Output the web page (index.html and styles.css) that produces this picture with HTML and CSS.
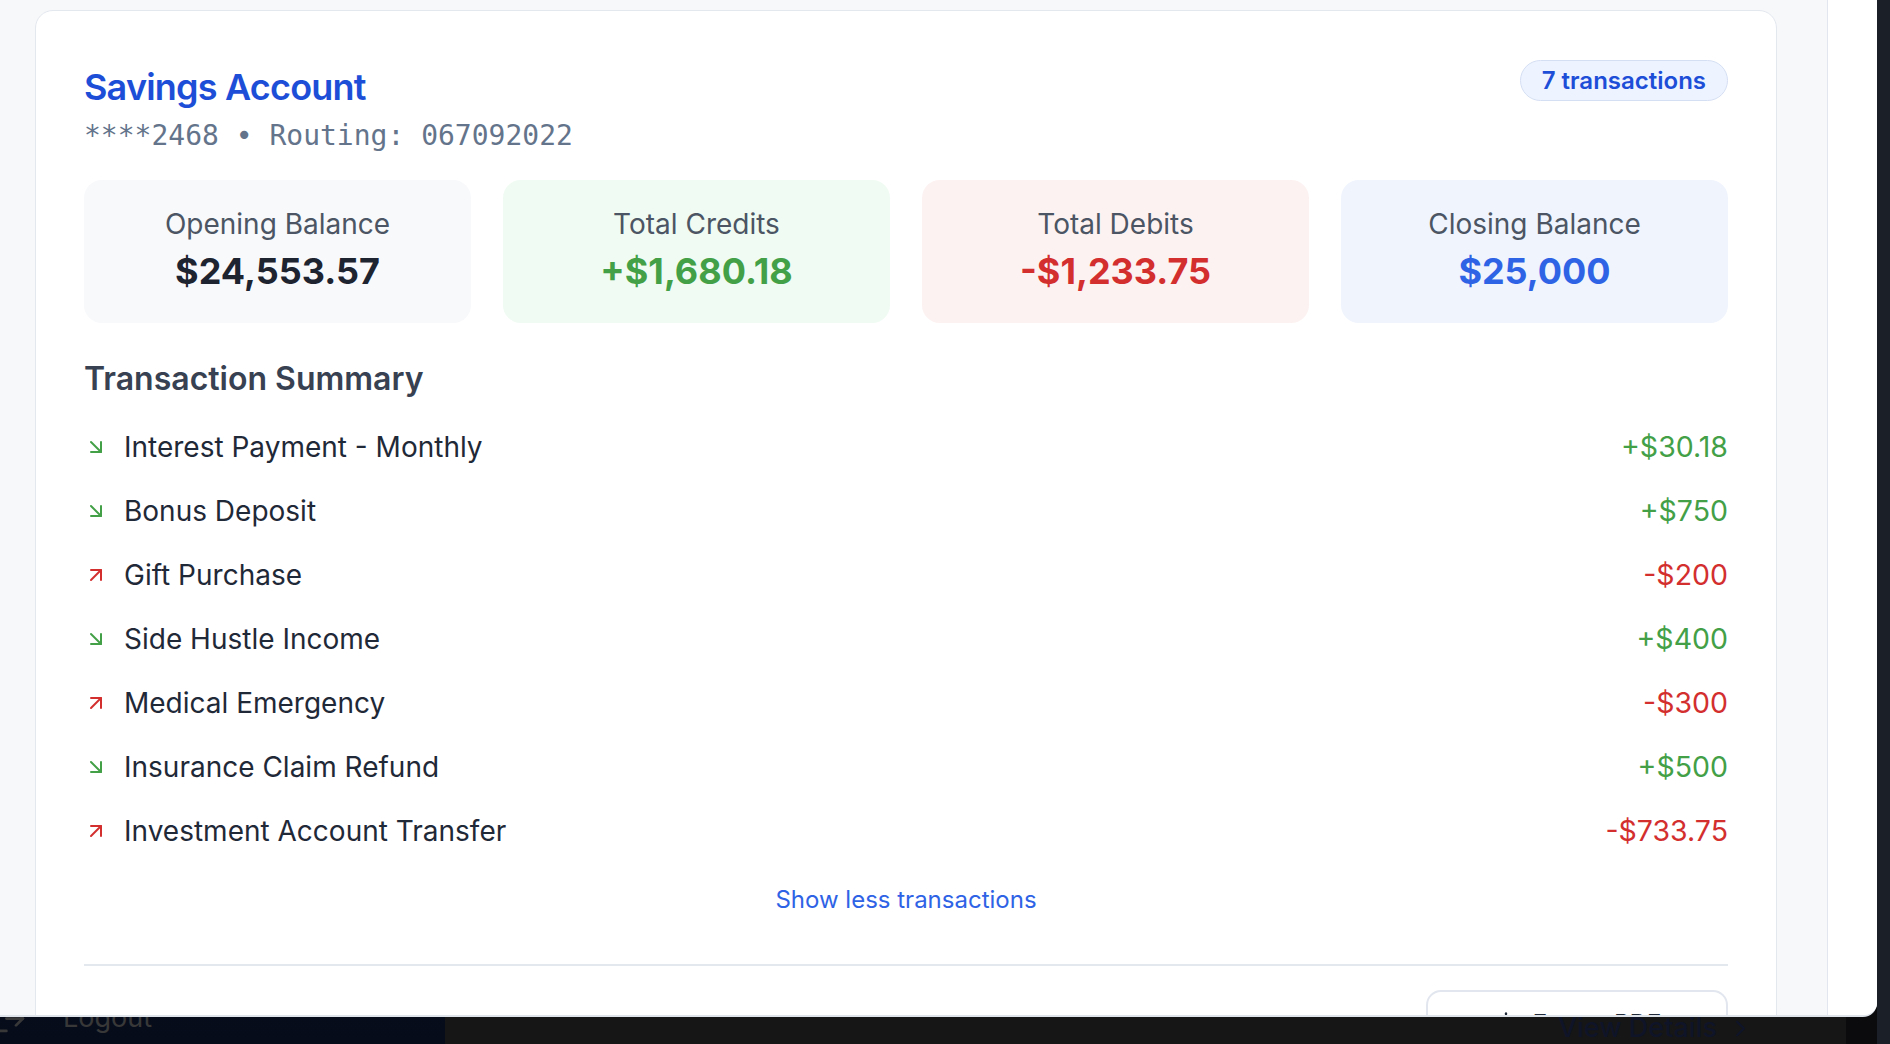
FILE: index.html
```html
<!DOCTYPE html>
<html lang="en">
<head>
<meta charset="utf-8">
<title>Savings Account</title>
<link rel="stylesheet" href="styles.css">
</head>
<body>
<div class="desktop">
  <div class="backdrop">
    <aside class="sidebar">
      <div class="logout">
        <svg class="logout-icon" viewBox="0 0 24 24" fill="none" stroke="currentColor" stroke-width="2" stroke-linecap="round" stroke-linejoin="round"><path d="M9 21H5a2 2 0 0 1-2-2V5a2 2 0 0 1 2-2h4"/><polyline points="16 17 21 12 16 7"/><line x1="21" y1="12" x2="9" y2="12"/></svg>
        <span>Logout</span>
      </div>
    </aside>
    <div class="behind">
      <div class="view-details">View Details
        <svg class="chev" viewBox="0 0 24 24" fill="none" stroke="currentColor" stroke-width="2" stroke-linecap="round" stroke-linejoin="round"><polyline points="9 18 15 12 9 6"/></svg>
      </div>
    </div>
    <div class="dark-edge"></div>
  </div>

  <div class="window">
    <div class="panel">
      <section class="card">
        <div class="head">
          <div>
            <h2 class="title">Savings Account</h2>
            <div class="acct">****2468 • Routing: 067092022</div>
          </div>
          <span class="badge">7 transactions</span>
        </div>

        <div class="stats">
          <div class="stat stat-open">
            <div class="stat-label">Opening Balance</div>
            <div class="stat-value">$24,553.57</div>
          </div>
          <div class="stat stat-credit">
            <div class="stat-label">Total Credits</div>
            <div class="stat-value">+$1,680.18</div>
          </div>
          <div class="stat stat-debit">
            <div class="stat-label">Total Debits</div>
            <div class="stat-value">-$1,233.75</div>
          </div>
          <div class="stat stat-close">
            <div class="stat-label">Closing Balance</div>
            <div class="stat-value">$25,000</div>
          </div>
        </div>

        <h3 class="sum-title">Transaction Summary</h3>
        <ul class="tx-list">
          <li class="tx">
            <div class="tx-left">
              <svg class="tx-icon in" viewBox="0 0 24 24" fill="none" stroke="currentColor" stroke-width="2" stroke-linecap="round" stroke-linejoin="round"><path d="M7 7l10 10"/><path d="M17 7v10H7"/></svg>
              <span class="tx-name">Interest Payment - Monthly</span>
            </div>
            <span class="tx-amt in">+$30.18</span>
          </li>
          <li class="tx">
            <div class="tx-left">
              <svg class="tx-icon in" viewBox="0 0 24 24" fill="none" stroke="currentColor" stroke-width="2" stroke-linecap="round" stroke-linejoin="round"><path d="M7 7l10 10"/><path d="M17 7v10H7"/></svg>
              <span class="tx-name">Bonus Deposit</span>
            </div>
            <span class="tx-amt in">+$750</span>
          </li>
          <li class="tx">
            <div class="tx-left">
              <svg class="tx-icon out" viewBox="0 0 24 24" fill="none" stroke="currentColor" stroke-width="2" stroke-linecap="round" stroke-linejoin="round"><path d="M7 17L17 7"/><path d="M7 7h10v10"/></svg>
              <span class="tx-name">Gift Purchase</span>
            </div>
            <span class="tx-amt out">-$200</span>
          </li>
          <li class="tx">
            <div class="tx-left">
              <svg class="tx-icon in" viewBox="0 0 24 24" fill="none" stroke="currentColor" stroke-width="2" stroke-linecap="round" stroke-linejoin="round"><path d="M7 7l10 10"/><path d="M17 7v10H7"/></svg>
              <span class="tx-name">Side Hustle Income</span>
            </div>
            <span class="tx-amt in">+$400</span>
          </li>
          <li class="tx">
            <div class="tx-left">
              <svg class="tx-icon out" viewBox="0 0 24 24" fill="none" stroke="currentColor" stroke-width="2" stroke-linecap="round" stroke-linejoin="round"><path d="M7 17L17 7"/><path d="M7 7h10v10"/></svg>
              <span class="tx-name">Medical Emergency</span>
            </div>
            <span class="tx-amt out">-$300</span>
          </li>
          <li class="tx">
            <div class="tx-left">
              <svg class="tx-icon in" viewBox="0 0 24 24" fill="none" stroke="currentColor" stroke-width="2" stroke-linecap="round" stroke-linejoin="round"><path d="M7 7l10 10"/><path d="M17 7v10H7"/></svg>
              <span class="tx-name">Insurance Claim Refund</span>
            </div>
            <span class="tx-amt in">+$500</span>
          </li>
          <li class="tx">
            <div class="tx-left">
              <svg class="tx-icon out" viewBox="0 0 24 24" fill="none" stroke="currentColor" stroke-width="2" stroke-linecap="round" stroke-linejoin="round"><path d="M7 17L17 7"/><path d="M7 7h10v10"/></svg>
              <span class="tx-name">Investment Account Transfer</span>
            </div>
            <span class="tx-amt out">-$733.75</span>
          </li>
        </ul>

        <div class="toggle"><button class="toggle-btn">Show less transactions</button></div>

        <div class="foot">
          <button class="export">
            <svg class="export-icon" viewBox="0 0 24 24" fill="none" stroke="currentColor" stroke-width="2" stroke-linecap="round" stroke-linejoin="round"><path d="M21 15v4a2 2 0 0 1-2 2H5a2 2 0 0 1-2-2v-4"/><polyline points="7 10 12 15 17 10"/><line x1="12" y1="15" x2="12" y2="3"/></svg>
            <span>Export PDF</span>
          </button>
        </div>
      </section>
    </div>
    <div class="gutter"></div>
  </div>
</div>
<div class="edge"></div>
</body>
</html>
```
FILE: styles.css
```css
* {
  box-sizing: border-box;
  margin: 0;
  padding: 0;
}

html, body {
  width: 1890px;
  height: 1044px;
  overflow: hidden;
}

body {
  display: flex;
  background: #1b1f27;
  font-family: Inter, "Noto Sans", sans-serif;
  color: #1f2937;
}

.desktop {
  position: relative;
  width: 1877px;
  height: 1044px;
  flex: none;
}

.edge {
  flex: 1;
  background: #1b1f27;
}

/* ---------- what lies behind the window ---------- */
.backdrop {
  display: flex;
  height: 100%;
}

.sidebar {
  width: 445px;
  background: linear-gradient(180deg, #0c1326 0%, #070c1b 100%);
  display: flex;
  flex-direction: column;
  justify-content: flex-end;
}

.logout {
  display: flex;
  align-items: center;
  gap: 36px;
  height: 40px;
  margin-bottom: 6px;
  margin-left: -6px;
  color: #383838;
  font-size: 27px;
  line-height: 40px;
}

.logout-icon {
  width: 33px;
  height: 33px;
}

.behind {
  flex: 1;
  background: #161616;
  display: flex;
  align-items: flex-end;
  justify-content: flex-end;
  padding-right: 92px;
}

.view-details {
  display: flex;
  align-items: center;
  gap: 10px;
  height: 36px;
  margin-bottom: -2px;
  color: #0f1428;
  font-size: 27px;
  line-height: 36px;
  font-weight: 500;
}

.chev {
  width: 27px;
  height: 27px;
}

.dark-edge {
  width: 31px;
  background: #0b0b0e;
}

/* ---------- window ---------- */
.window {
  position: absolute;
  top: 0;
  left: 0;
  width: 1877px;
  height: 1017px;
  display: flex;
  background: #ffffff;
  border-bottom: 2px solid #dfe3ea;
  border-bottom-right-radius: 14px;
  overflow: hidden;
}

.panel {
  width: 1828px;
  flex: none;
  background: #f7f8fa;
  border-right: 1px solid #e2e6ee;
  padding: 10px 50px 0 35px;
  overflow: hidden;
}

.gutter {
  flex: 1;
  background: #ffffff;
}

.card {
  background: #ffffff;
  border: 1px solid #e3e7ee;
  border-radius: 18px;
  padding: 48px 48px 48px 48px;
}

.head {
  display: flex;
  justify-content: space-between;
  align-items: flex-start;
}

.title {
  font-size: 36px;
  line-height: 56px;
  font-weight: 600;
  color: #1d4ed8;
  letter-spacing: -0.8px;
}

.acct {
  font-family: "DejaVu Sans Mono", "Liberation Mono", monospace;
  font-size: 28px;
  line-height: 42px;
  color: #64748b;
}

.badge {
  margin-top: 1px;
  padding: 4px 21px;
  border: 1px solid #d5dff3;
  border-radius: 999px;
  background: #eef4ff;
  color: #1d4ed8;
  font-size: 24px;
  line-height: 31px;
  font-weight: 600;
}

.stats {
  display: grid;
  grid-template-columns: repeat(4, 1fr);
  gap: 32px;
  margin-top: 23px;
}

.stat {
  border-radius: 18px;
  padding: 24px 16px;
  text-align: center;
}

.stat-label {
  font-size: 28px;
  line-height: 40px;
  color: #4b5563;
}

.stat-value {
  font-size: 36px;
  line-height: 55px;
  font-weight: 700;
}

.stat-open { background: #f8f9fb; }
.stat-open .stat-value { color: #1e2430; }
.stat-credit { background: #f0fbf3; }
.stat-credit .stat-value { color: #43a047; }
.stat-debit { background: #fdf2f2; }
.stat-debit .stat-value { color: #d32f2f; }
.stat-close { background: #eff4fd; }
.stat-close .stat-value { color: #2f63e6; }

.sum-title {
  margin-top: 35px;
  font-size: 32px;
  line-height: 42px;
  font-weight: 600;
  color: #374151;
}

.tx-list {
  list-style: none;
  margin-top: 15px;
}

.tx {
  height: 64px;
  display: flex;
  align-items: center;
  justify-content: space-between;
}

.tx-left {
  display: flex;
  align-items: center;
  gap: 16px;
}

.tx-icon {
  width: 24px;
  height: 24px;
  flex: none;
}

.tx-name {
  font-size: 28px;
  line-height: 40px;
  color: #1f2937;
}

.tx-amt {
  font-size: 28.5px;
  line-height: 40px;
}

.in { color: #43a047; }
.out { color: #d32f2f; }

.toggle {
  margin-top: 19px;
  text-align: center;
}

.toggle-btn {
  border: none;
  background: none;
  font-family: inherit;
  font-size: 24px;
  line-height: 36px;
  color: #2f63e6;
}

.foot {
  margin-top: 46px;
  border-top: 2px solid #e3e7ee;
  padding-top: 24px;
  display: flex;
  justify-content: flex-end;
}

.export {
  width: 302px;
  height: 66px;
  border: 2px solid #e2e6ee;
  border-radius: 15px;
  background: #ffffff;
  display: flex;
  align-items: center;
  justify-content: center;
  gap: 14px;
  font-family: inherit;
  font-size: 24px;
  font-weight: 500;
  color: #1f2937;
}

.export-icon {
  width: 26px;
  height: 26px;
}
```
